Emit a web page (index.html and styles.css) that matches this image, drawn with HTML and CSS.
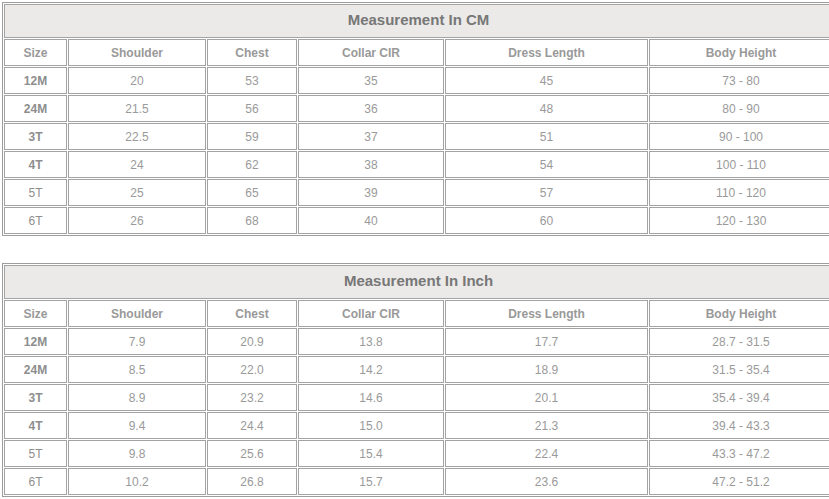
FILE: index.html
```html
<!DOCTYPE html>
<html>
<head>
<meta charset="utf-8">
<link rel="stylesheet" href="styles.css">
</head>
<body>
<div class="page">
<table class="size-table">
  <colgroup><col class="c1"><col class="c2"><col class="c3"><col class="c4"><col class="c5"><col class="c6"></colgroup>
  <tr><td class="title" colspan="6">Measurement In CM</td></tr>
  <tr class="head"><td>Size</td><td>Shoulder</td><td>Chest</td><td>Collar CIR</td><td>Dress Length</td><td>Body Height</td></tr>
  <tr><td class="sz b">12M</td><td>20</td><td>53</td><td>35</td><td>45</td><td>73 - 80</td></tr>
  <tr><td class="sz b">24M</td><td>21.5</td><td>56</td><td>36</td><td>48</td><td>80 - 90</td></tr>
  <tr><td class="sz b">3T</td><td>22.5</td><td>59</td><td>37</td><td>51</td><td>90 - 100</td></tr>
  <tr><td class="sz b">4T</td><td>24</td><td>62</td><td>38</td><td>54</td><td>100 - 110</td></tr>
  <tr><td class="sz">5T</td><td>25</td><td>65</td><td>39</td><td>57</td><td>110 - 120</td></tr>
  <tr><td class="sz">6T</td><td>26</td><td>68</td><td>40</td><td>60</td><td>120 - 130</td></tr>
</table>
<table class="size-table">
  <colgroup><col class="c1"><col class="c2"><col class="c3"><col class="c4"><col class="c5"><col class="c6"></colgroup>
  <tr><td class="title" colspan="6">Measurement In Inch</td></tr>
  <tr class="head"><td>Size</td><td>Shoulder</td><td>Chest</td><td>Collar CIR</td><td>Dress Length</td><td>Body Height</td></tr>
  <tr><td class="sz b">12M</td><td>7.9</td><td>20.9</td><td>13.8</td><td>17.7</td><td>28.7 - 31.5</td></tr>
  <tr><td class="sz b">24M</td><td>8.5</td><td>22.0</td><td>14.2</td><td>18.9</td><td>31.5 - 35.4</td></tr>
  <tr><td class="sz b">3T</td><td>8.9</td><td>23.2</td><td>14.6</td><td>20.1</td><td>35.4 - 39.4</td></tr>
  <tr><td class="sz b">4T</td><td>9.4</td><td>24.4</td><td>15.0</td><td>21.3</td><td>39.4 - 43.3</td></tr>
  <tr><td class="sz">5T</td><td>9.8</td><td>25.6</td><td>15.4</td><td>22.4</td><td>43.3 - 47.2</td></tr>
  <tr><td class="sz">6T</td><td>10.2</td><td>26.8</td><td>15.7</td><td>23.6</td><td>47.2 - 51.2</td></tr>
</table>
</div>
</body>
</html>
```
FILE: styles.css
```css
html, body {
  margin: 0;
  padding: 0;
  overflow: hidden;
  background: #fff;
}
.page {
  padding: 2px 0 0 2px;
  display: flex;
  flex-direction: column;
  gap: 27px;
  width: 840px;
}
.size-table {
  width: 824px;
  table-layout: fixed;
  border-collapse: separate;
  border-spacing: 1px;
  border: 1px solid #9d9d9d;
  font-family: "Liberation Sans", Arial, sans-serif;
  font-size: 12px;
  color: #9a9a9a;
}
.c1 { width: 63px; }
.c2 { width: 138px; }
.c3 { width: 90px; }
.c4 { width: 146px; }
.c5 { width: 203px; }
.c6 { width: 184px; }
.size-table td {
  box-sizing: border-box;
  border: 1px solid #a3a3a3;
  height: 27px;
  padding: 0;
  text-align: center;
  vertical-align: middle;
}
.size-table td.title {
  height: 34px;
  padding-bottom: 3px;
  background: #ebeae8;
  border-color: #a3a3a3;
  color: #777;
  font-weight: bold;
  font-size: 15px;
}
.head td {
  font-weight: bold;
  color: #999;
}
.size-table td.b {
  font-weight: bold;
  color: #8e8e8e;
}
.size-table td.sz {
  color: #8e8e8e;
}
```
